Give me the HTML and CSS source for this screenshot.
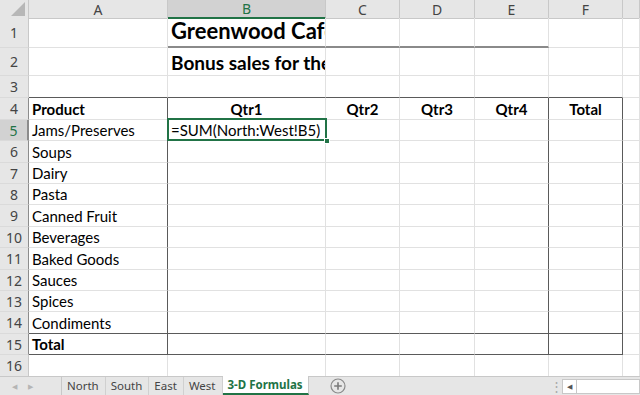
FILE: index.html
```html
<!DOCTYPE html>
<html lang="en">

<head>
  <meta charset="UTF-8" />
  <title>3-D Formulas</title>
  <meta name="viewport" content="width=device-width, initial-scale=1.0" />
  <link rel="stylesheet" href="styles.css">
</head>

<body>

  <div class="sheet">
    <div class="row hdr">
      <div class="corner">
        <svg width="16" height="15" viewBox="0 0 16 15"><polygon points="15,0 15,14 1,14" fill="#b7b7b7" /></svg>
      </div>
      <div class="ch">A</div>
      <div class="ch on">B</div>
      <div class="ch">C</div>
      <div class="ch">D</div>
      <div class="ch">E</div>
      <div class="ch">F</div>
      <div class="ch"></div>
    </div>

    <div class="row r1">
      <div class="rh">1</div>
      <div class="c"></div>
      <div class="c u title">Greenwood Cafe</div>
      <div class="c u"></div>
      <div class="c u"></div>
      <div class="c u"></div>
      <div class="c"></div>
      <div class="c"></div>
    </div>

    <div class="row r2">
      <div class="rh">2</div>
      <div class="c"></div>
      <div class="c subtitle">Bonus sales for the</div>
      <div class="c"></div>
      <div class="c"></div>
      <div class="c"></div>
      <div class="c"></div>
      <div class="c"></div>
    </div>

    <div class="row r3">
      <div class="rh">3</div>
      <div class="c bb"></div>
      <div class="c bb"></div>
      <div class="c bb"></div>
      <div class="c bb"></div>
      <div class="c bb"></div>
      <div class="c bb"></div>
      <div class="c"></div>
    </div>

    <div class="row r4">
      <div class="rh tb">4</div>
      <div class="c br b">Product</div>
      <div class="c b mid">Qtr1</div>
      <div class="c b mid">Qtr2</div>
      <div class="c b mid">Qtr3</div>
      <div class="c br b mid">Qtr4</div>
      <div class="c br b mid">Total</div>
      <div class="c"></div>
    </div>

    <div class="row r5">
      <div class="rh tb on">5</div>
      <div class="c br">Jams/Preserves</div>
      <div class="c active">=SUM(North:West!B5)<span class="pick"><i class="handle"></i></span></div>
      <div class="c"></div>
      <div class="c"></div>
      <div class="c br"></div>
      <div class="c br"></div>
      <div class="c"></div>
    </div>

    <div class="row r6">
      <div class="rh tb">6</div>
      <div class="c br">Soups</div>
      <div class="c"></div>
      <div class="c"></div>
      <div class="c"></div>
      <div class="c br"></div>
      <div class="c br"></div>
      <div class="c"></div>
    </div>

    <div class="row r5">
      <div class="rh tb">7</div>
      <div class="c br">Dairy</div>
      <div class="c"></div>
      <div class="c"></div>
      <div class="c"></div>
      <div class="c br"></div>
      <div class="c br"></div>
      <div class="c"></div>
    </div>

    <div class="row r5">
      <div class="rh tb">8</div>
      <div class="c br">Pasta</div>
      <div class="c"></div>
      <div class="c"></div>
      <div class="c"></div>
      <div class="c br"></div>
      <div class="c br"></div>
      <div class="c"></div>
    </div>

    <div class="row r6">
      <div class="rh tb">9</div>
      <div class="c br">Canned Fruit</div>
      <div class="c"></div>
      <div class="c"></div>
      <div class="c"></div>
      <div class="c br"></div>
      <div class="c br"></div>
      <div class="c"></div>
    </div>

    <div class="row r5">
      <div class="rh tb">10</div>
      <div class="c br">Beverages</div>
      <div class="c"></div>
      <div class="c"></div>
      <div class="c"></div>
      <div class="c br"></div>
      <div class="c br"></div>
      <div class="c"></div>
    </div>

    <div class="row r6">
      <div class="rh tb">11</div>
      <div class="c br">Baked Goods</div>
      <div class="c"></div>
      <div class="c"></div>
      <div class="c"></div>
      <div class="c br"></div>
      <div class="c br"></div>
      <div class="c"></div>
    </div>

    <div class="row r5">
      <div class="rh tb">12</div>
      <div class="c br">Sauces</div>
      <div class="c"></div>
      <div class="c"></div>
      <div class="c"></div>
      <div class="c br"></div>
      <div class="c br"></div>
      <div class="c"></div>
    </div>

    <div class="row r5">
      <div class="rh tb">13</div>
      <div class="c br">Spices</div>
      <div class="c"></div>
      <div class="c"></div>
      <div class="c"></div>
      <div class="c br"></div>
      <div class="c br"></div>
      <div class="c"></div>
    </div>

    <div class="row r6">
      <div class="rh tb">14</div>
      <div class="c br bb">Condiments</div>
      <div class="c bb"></div>
      <div class="c bb"></div>
      <div class="c bb"></div>
      <div class="c br bb"></div>
      <div class="c br bb"></div>
      <div class="c"></div>
    </div>

    <div class="row r5">
      <div class="rh tb">15</div>
      <div class="c br bb b">Total</div>
      <div class="c bb"></div>
      <div class="c bb"></div>
      <div class="c bb"></div>
      <div class="c br bb"></div>
      <div class="c br bb"></div>
      <div class="c"></div>
    </div>

    <div class="row r6">
      <div class="rh">16</div>
      <div class="c"></div>
      <div class="c"></div>
      <div class="c"></div>
      <div class="c"></div>
      <div class="c"></div>
      <div class="c"></div>
      <div class="c"></div>
    </div>
  </div>

  <div class="tabbar">
    <div class="nav">
      <span class="arrow">&#9664;</span>
      <span class="arrow">&#9654;</span>
    </div>
    <div class="tabs">
      <div class="tab">North</div>
      <div class="tab">South</div>
      <div class="tab">East</div>
      <div class="tab">West</div>
      <div class="tab current">3-D Formulas</div>
    </div>
    <div class="add">
      <svg width="16" height="16" viewBox="0 0 16 16">
        <circle cx="8" cy="8" r="7" fill="none" stroke="#8a8a8a" stroke-width="1.2" />
        <path d="M8 4.2v7.6M4.2 8h7.6" stroke="#7a7a7a" stroke-width="1.6" />
      </svg>
    </div>
    <div class="spacer"></div>
    <div class="grip">&#8942;</div>
    <div class="hscroll">
      <div class="sbtn">&#9664;</div>
      <div class="track"></div>
    </div>
  </div>

</body>

</html>
```

FILE: styles.css
```css
* {
  margin: 0;
  padding: 0;
  box-sizing: border-box;
}

body {
  width: 640px;
  height: 395px;
  overflow: hidden;
  background: #fff;
  font-family: Lato, "Liberation Sans", sans-serif;
  color: #000;
}

.sheet {
  height: 376px;
  overflow: hidden;
}

.row {
  display: grid;
  grid-template-columns: 29px 139px 158px 74px 75px 74px 74px 1fr;
  height: 21px;
}

.hdr { height: 18px; }
.r1 { height: 30px; }
.r2 { height: 28px; }
.r3, .r4 { height: 22px; }
.r5 { height: 21px; }
.r6 { height: 22px; }

/* headers */
.corner,
.ch,
.rh {
  background: #e6e6e6;
  color: #444;
  font-family: "Noto Sans", "Open Sans", sans-serif;
  font-size: 14px;
  border-right: 1px solid #c8c8c8;
  border-bottom: 1px solid #c8c8c8;
  display: flex;
  align-items: center;
  justify-content: center;
}

.corner {
  align-items: flex-end;
  justify-content: flex-end;
  padding: 0 2px 1px 0;
}

.ch { line-height: 17px; }

.ch.on {
  background: #d2d2d2;
  color: #217346;
  border-bottom: 2px solid #217346;
}

.rh {
  border-bottom-color: #dadada;
}

.rh.on {
  background: #d2d2d2;
  color: #217346;
  border-right: 2px solid #217346;
}

/* cells */
.c {
  border-right: 1px solid #e1e1e1;
  border-bottom: 1px solid #e1e1e1;
  font-size: 15px;
  line-height: 18px;
  padding: 0 0 1px 3px;
  white-space: nowrap;
  overflow: hidden;
  display: flex;
  align-items: flex-end;
}

.c.mid {
  justify-content: center;
  padding-right: 3px;
}

.c.b { font-weight: bold; }

.c.br { border-right: 1px solid #5a5a5a; }
.c.bb { border-bottom: 1px solid #5a5a5a; }
.rh.tb { border-right-color: #8c8c8c; }

.c.u { border-bottom: 2px solid #8a8a8a; }

.title {
  font-size: 22px;
  font-weight: bold;
  line-height: 26px;
  padding-bottom: 2px;
}

.subtitle {
  font-size: 19px;
  font-weight: bold;
  line-height: 23px;
  padding-bottom: 1px;
}

.c.active {
  position: relative;
  overflow: visible;
}

.pick {
  position: absolute;
  top: -2px;
  left: -1px;
  right: -2px;
  bottom: -1px;
  border: 2px solid #217346;
}

.handle {
  position: absolute;
  right: -5px;
  bottom: -5px;
  width: 6px;
  height: 6px;
  background: #217346;
  border: 1px solid #fff;
}

/* sheet tabs */
.tabbar {
  height: 19px;
  background: #e6e6e6;
  border-top: 1px solid #c8c8c8;
  display: flex;
  align-items: stretch;
  font-family: "Noto Sans", "Open Sans", sans-serif;
  font-size: 11.5px;
  color: #444;
}

.nav {
  width: 62px;
  display: flex;
  align-items: center;
  gap: 11px;
  padding-left: 12px;
  border-right: 1px solid #c8c8c8;
  font-size: 7px;
  color: #b5b5b5;
}

.tabs {
  display: flex;
}

.tab {
  padding: 0 6px 0 5px;
  line-height: 17px;
  border-right: 1px solid #d0d0d0;
}

.tab.current {
  margin-top: -1px;
  padding: 0 5px;
  background: #fff;
  color: #217346;
  font-weight: bold;
  border-bottom: 2px solid #217346;
  border-right: 1px solid #c8c8c8;
  line-height: 18px;
}

.add {
  margin-left: 21px;
  display: flex;
  align-items: center;
}

.spacer { flex: 1; }

.grip {
  width: 12px;
  font-size: 13px;
  color: #a8a8a8;
  line-height: 18px;
}

.hscroll {
  width: 78px;
  display: flex;
  padding: 2px 0 1px;
}

.sbtn {
  width: 15px;
  background: #fff;
  border: 1px solid #c8c8c8;
  font-size: 7px;
  color: #555;
  display: flex;
  align-items: center;
  justify-content: center;
}

.track {
  flex: 1;
  background: #fff;
  border: 1px solid #c8c8c8;
  border-left: none;
}
```
